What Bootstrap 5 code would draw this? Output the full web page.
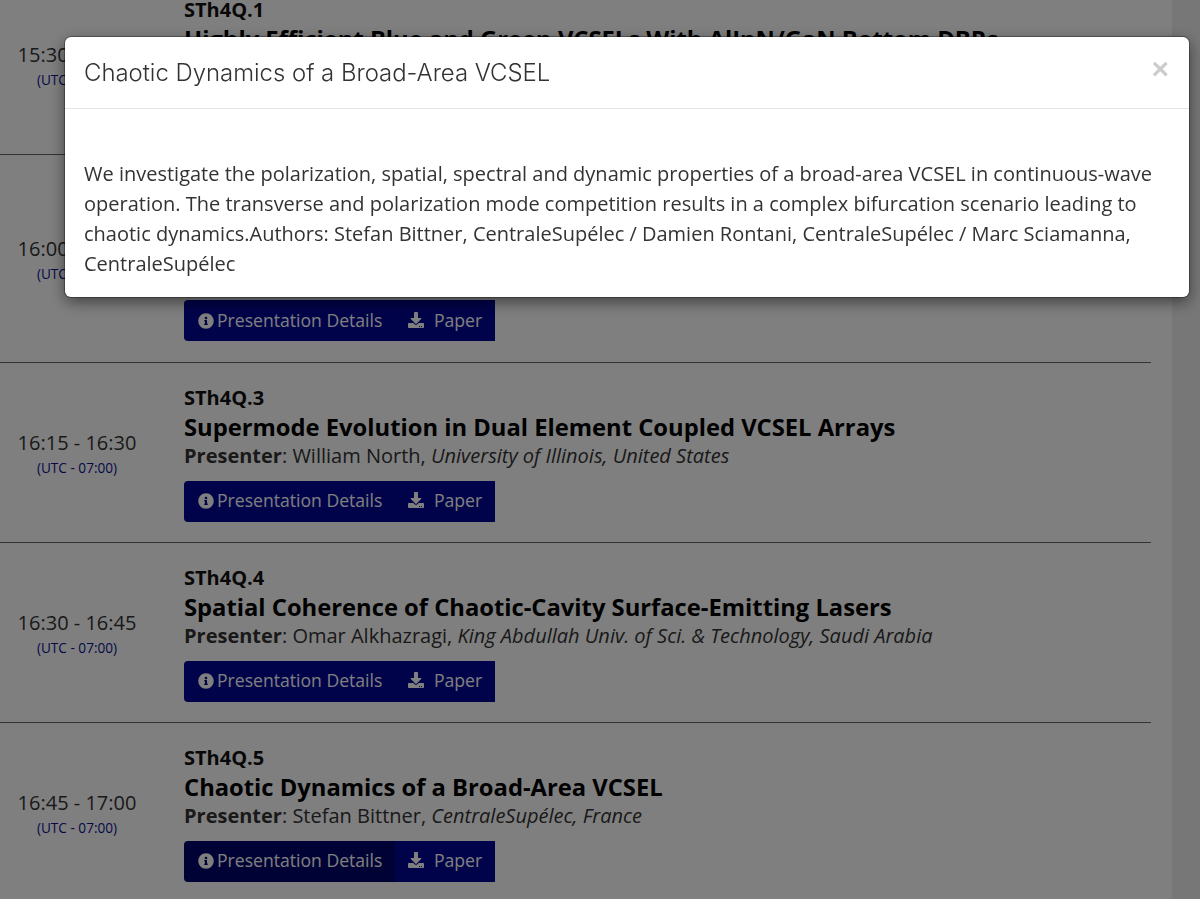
<!DOCTYPE html>
<html lang="en">
<head>
<meta charset="utf-8">
<title>Chaotic Dynamics of a Broad-Area VCSEL</title>
<link href="https://cdn.jsdelivr.net/npm/bootstrap@5.3.0/dist/css/bootstrap.min.css" rel="stylesheet">
<style>
html,body{height:899px;overflow:hidden}
body{font-family:"Open Sans","Liberation Sans",sans-serif;color:#333;background:#fff}
.pg-wrap{height:899px;overflow:hidden}
.pg-main{width:1172px;margin-top:-25px}
.pg-strip{width:28px;background:#eee;flex:none}
.sess-list{width:1151px}
.sess-row{height:180px;border-bottom:1px solid #666}
.sess-row.sess-tall{height:208px}
.sess-row.sess-last{border-bottom:0}
.sess-time{width:154px;flex:none;text-align:center;font-size:20px;line-height:25px;color:#333;padding-top:4px}
.sess-tz{font-size:13.6px;color:#0a1090;line-height:25px}
.sess-body{margin-left:30px;padding-top:20px}
.sess-code{font-size:20px;font-weight:700;line-height:30px;color:#111}
.sess-title{font-size:23.75px;font-weight:700;line-height:29px;color:#000}
.sess-pres{font-size:20px;line-height:28px;color:#333}
.sess-btns{margin-top:11px}
.sess-btns-only{padding-bottom:21px}
.btn.act-btn{background:#000594;border:0;border-radius:0;color:#fff;font-size:17.6px;height:41px;padding:0 0 2px 14px;line-height:39px;display:inline-flex;align-items:center;white-space:nowrap;margin:0}
.sess-btns-only .btn.act-btn{padding-bottom:0}
.btn.act-btn.act-first{border-radius:4px 0 0 4px;width:212px;gap:3px}
.btn.act-btn.act-on{background:#00046a}
.btn.act-btn.act-paper{width:100px;padding-left:13px;gap:10px}
.act-ico{width:16px;height:16px;fill:currentColor;flex:none}
.act-ico-w{margin-bottom:2px}
.over-backdrop{opacity:.5}
.over-wrap.modal{overflow:hidden}
.over-dialog.modal-dialog{margin:37px 0 0 65px;width:1124px;max-width:none}
.over-dialog .modal-content{border:0;border-radius:6px;box-shadow:0 0 0 1px rgba(0,0,0,.3),0 5px 15px rgba(0,0,0,.5);height:260px;background:#fff}
.over-dialog .modal-header{height:72px;padding:0 19px;border-bottom:1px solid #e5e5e5;display:flex;justify-content:space-between;align-items:center}
.over-title{font-family:Inter,"Liberation Sans",sans-serif;font-weight:300;font-size:23.9px;color:#333;line-height:1.2;margin:2px 0 0}
.over-close{background:none;border:0;padding:0;color:#000;opacity:.2;font-size:30px;font-weight:700;line-height:1;font-family:"Liberation Sans",sans-serif;margin-right:1px;margin-top:-8px}
.over-body{padding:50px 19px 0;font-size:20px;line-height:30px;color:#333}
</style>
</head>
<body>
<svg class="d-none" aria-hidden="true">
  <symbol id="ico-info" viewBox="0 0 512 512"><path d="M256 8C119.043 8 8 119.083 8 256c0 136.997 111.043 248 248 248s248-111.003 248-248C504 119.083 392.957 8 256 8zm0 110c23.196 0 42 18.804 42 42s-18.804 42-42 42-42-18.804-42-42 18.804-42 42-42zm56 254c0 6.627-5.373 12-12 12h-88c-6.627 0-12-5.373-12-12v-24c0-6.627 5.373-12 12-12h12v-64h-12c-6.627 0-12-5.373-12-12v-24c0-6.627 5.373-12 12-12h64c6.627 0 12 5.373 12 12v100h12c6.627 0 12 5.373 12 12v24z"/></symbol>
  <symbol id="ico-down" viewBox="0 0 512 512"><path d="M216 0h80c13.3 0 24 10.7 24 24v168h87.7c17.8 0 26.7 21.5 14.1 34.1L269.7 378.3c-7.5 7.5-19.8 7.5-27.3 0L90.1 226.1c-12.6-12.6-3.7-34.1 14.1-34.1H192V24c0-13.3 10.7-24 24-24zm296 376v112c0 13.3-10.7 24-24 24H24c-13.3 0-24-10.7-24-24V376c0-13.3 10.7-24 24-24h146.7l49 49c20.1 20.1 52.5 20.1 72.6 0l49-49H488c13.3 0 24 10.7 24 24zm-124 88c0-11-9-20-20-20s-20 9-20 20 9 20 20 20 20-9 20-20zm64 0c0-11-9-20-20-20s-20 9-20 20 9 20 20 20 20-9 20-20z"/></symbol>
</svg>
<div class="pg-wrap d-flex">
  <main class="pg-main flex-grow-1">
    <div class="sess-list">
      <section class="sess-row d-flex align-items-center">
        <div class="sess-time">15:30 - 15:45<div class="sess-tz">(UTC - 07:00)</div></div>
        <div class="sess-body align-self-start">
          <div class="sess-code">STh4Q.1</div>
          <div class="sess-title">Highly Efficient Blue and Green VCSELs With AlInN/GaN Bottom DBRs</div>
        </div>
      </section>
      <section class="sess-row sess-tall d-flex align-items-center">
        <div class="sess-time">16:00 - 16:15<div class="sess-tz">(UTC - 07:00)</div></div>
        <div class="sess-body sess-btns-only align-self-end">
          <div class="btn-group sess-btns">
            <a class="btn act-btn act-first" href="#"><svg class="act-ico"><use href="#ico-info"/></svg>Presentation Details</a>
            <a class="btn act-btn act-paper" href="#"><svg class="act-ico act-ico-w"><use href="#ico-down"/></svg>Paper</a>
          </div>
        </div>
      </section>
      <section class="sess-row d-flex align-items-center">
        <div class="sess-time">16:15 - 16:30<div class="sess-tz">(UTC - 07:00)</div></div>
        <div class="sess-body align-self-start">
          <div class="sess-code">STh4Q.3</div>
          <div class="sess-title">Supermode Evolution in Dual Element Coupled VCSEL Arrays</div>
          <div class="sess-pres"><strong>Presenter</strong>: William North, <em>University of Illinois, United States</em></div>
          <div class="btn-group sess-btns">
            <a class="btn act-btn act-first" href="#"><svg class="act-ico"><use href="#ico-info"/></svg>Presentation Details</a>
            <a class="btn act-btn act-paper" href="#"><svg class="act-ico act-ico-w"><use href="#ico-down"/></svg>Paper</a>
          </div>
        </div>
      </section>
      <section class="sess-row d-flex align-items-center">
        <div class="sess-time">16:30 - 16:45<div class="sess-tz">(UTC - 07:00)</div></div>
        <div class="sess-body align-self-start">
          <div class="sess-code">STh4Q.4</div>
          <div class="sess-title">Spatial Coherence of Chaotic-Cavity Surface-Emitting Lasers</div>
          <div class="sess-pres"><strong>Presenter</strong>: Omar Alkhazragi, <em>King Abdullah Univ. of Sci. &amp; Technology, Saudi Arabia</em></div>
          <div class="btn-group sess-btns">
            <a class="btn act-btn act-first" href="#"><svg class="act-ico"><use href="#ico-info"/></svg>Presentation Details</a>
            <a class="btn act-btn act-paper" href="#"><svg class="act-ico act-ico-w"><use href="#ico-down"/></svg>Paper</a>
          </div>
        </div>
      </section>
      <section class="sess-row sess-last d-flex align-items-center">
        <div class="sess-time">16:45 - 17:00<div class="sess-tz">(UTC - 07:00)</div></div>
        <div class="sess-body align-self-start">
          <div class="sess-code">STh4Q.5</div>
          <div class="sess-title">Chaotic Dynamics of a Broad-Area VCSEL</div>
          <div class="sess-pres"><strong>Presenter</strong>: Stefan Bittner, <em>CentraleSupélec, France</em></div>
          <div class="btn-group sess-btns">
            <a class="btn act-btn act-first act-on" href="#"><svg class="act-ico"><use href="#ico-info"/></svg>Presentation Details</a>
            <a class="btn act-btn act-paper" href="#"><svg class="act-ico act-ico-w"><use href="#ico-down"/></svg>Paper</a>
          </div>
        </div>
      </section>
    </div>
  </main>
  <div class="pg-strip"></div>
</div>
<div class="modal-backdrop show over-backdrop"></div>
<div class="modal d-block over-wrap">
<div class="modal-dialog over-dialog">
  <div class="modal-content">
    <div class="modal-header">
      <h4 class="over-title">Chaotic Dynamics of a Broad-Area VCSEL</h4>
      <button type="button" class="over-close" aria-label="Close">×</button>
    </div>
    <div class="over-body">We investigate the polarization, spatial, spectral and dynamic properties of a broad-area VCSEL in continuous-wave operation. The transverse and polarization mode competition results in a complex bifurcation scenario leading to chaotic dynamics.Authors: Stefan Bittner, CentraleSupélec / Damien Rontani, CentraleSupélec / Marc Sciamanna, CentraleSupélec</div>
  </div>
</div>
</div>
<script src="https://cdn.jsdelivr.net/npm/bootstrap@5.3.0/dist/js/bootstrap.bundle.min.js"></script>
</body>
</html>
